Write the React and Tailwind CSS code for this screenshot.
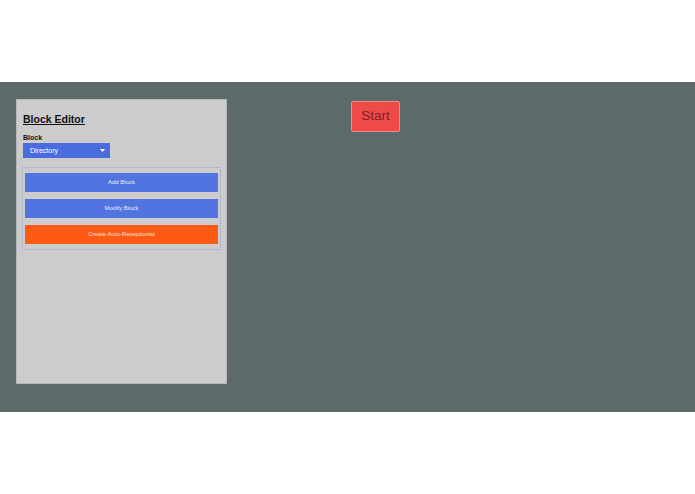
export default function App() {
  return (
    <div className="w-[695px] h-[494px] bg-white" style={{ fontFamily: '"Liberation Sans", Arial, sans-serif' }}>
      <div className="h-[82px]" />
      <div className="h-[330px] bg-[#5d6a6a] flex items-start pl-[16px] pt-[17px]">
        <div className="w-[211px] h-[285px] bg-[#cccccc] border border-[#b4b8b8] px-[5px] pt-[13px] flex flex-col">
          <div className="ml-[1px] text-[10.5px] leading-[12px] font-bold underline text-[#111]">Block Editor</div>
          <div className="ml-[1px] mt-[9px] text-[7px] leading-[8px] font-bold text-[#111]">Block</div>
          <div className="ml-[1px] mt-[1px] w-[87px] h-[15px] bg-[#4a6cdf] flex items-center justify-between pl-[7px] pr-[5px]">
            <span className="text-[7px] leading-[8px] text-white">Directory</span>
            <svg width="5" height="3" viewBox="0 0 5 3"><path d="M0 0 L5 0 L2.5 3 Z" fill="white" /></svg>
          </div>
          <div className="mt-[9px] border border-dotted border-[#9ea6cc] px-[2px] py-[5px] flex flex-col gap-[7px]">
            <div className="h-[19px] bg-[#5274e0] flex items-center justify-center text-[6px] text-[#e8ecfa]">Add Block</div>
            <div className="h-[19px] bg-[#5274e0] flex items-center justify-center text-[6px] text-[#e8ecfa]">Modify Block</div>
            <div className="h-[19px] bg-[#fd5a16] flex items-center justify-center text-[6px] text-[#fbe2d6]">Create Auto-Receptionist</div>
          </div>
        </div>
        <div className="ml-[124px] mt-[2px] w-[49px] h-[31px] bg-[#ee4a47] border border-[#f08a88] rounded-[2px] flex items-center justify-center text-[13.5px] text-[#7e2424]">
          Start
        </div>
      </div>
    </div>
  );
}
